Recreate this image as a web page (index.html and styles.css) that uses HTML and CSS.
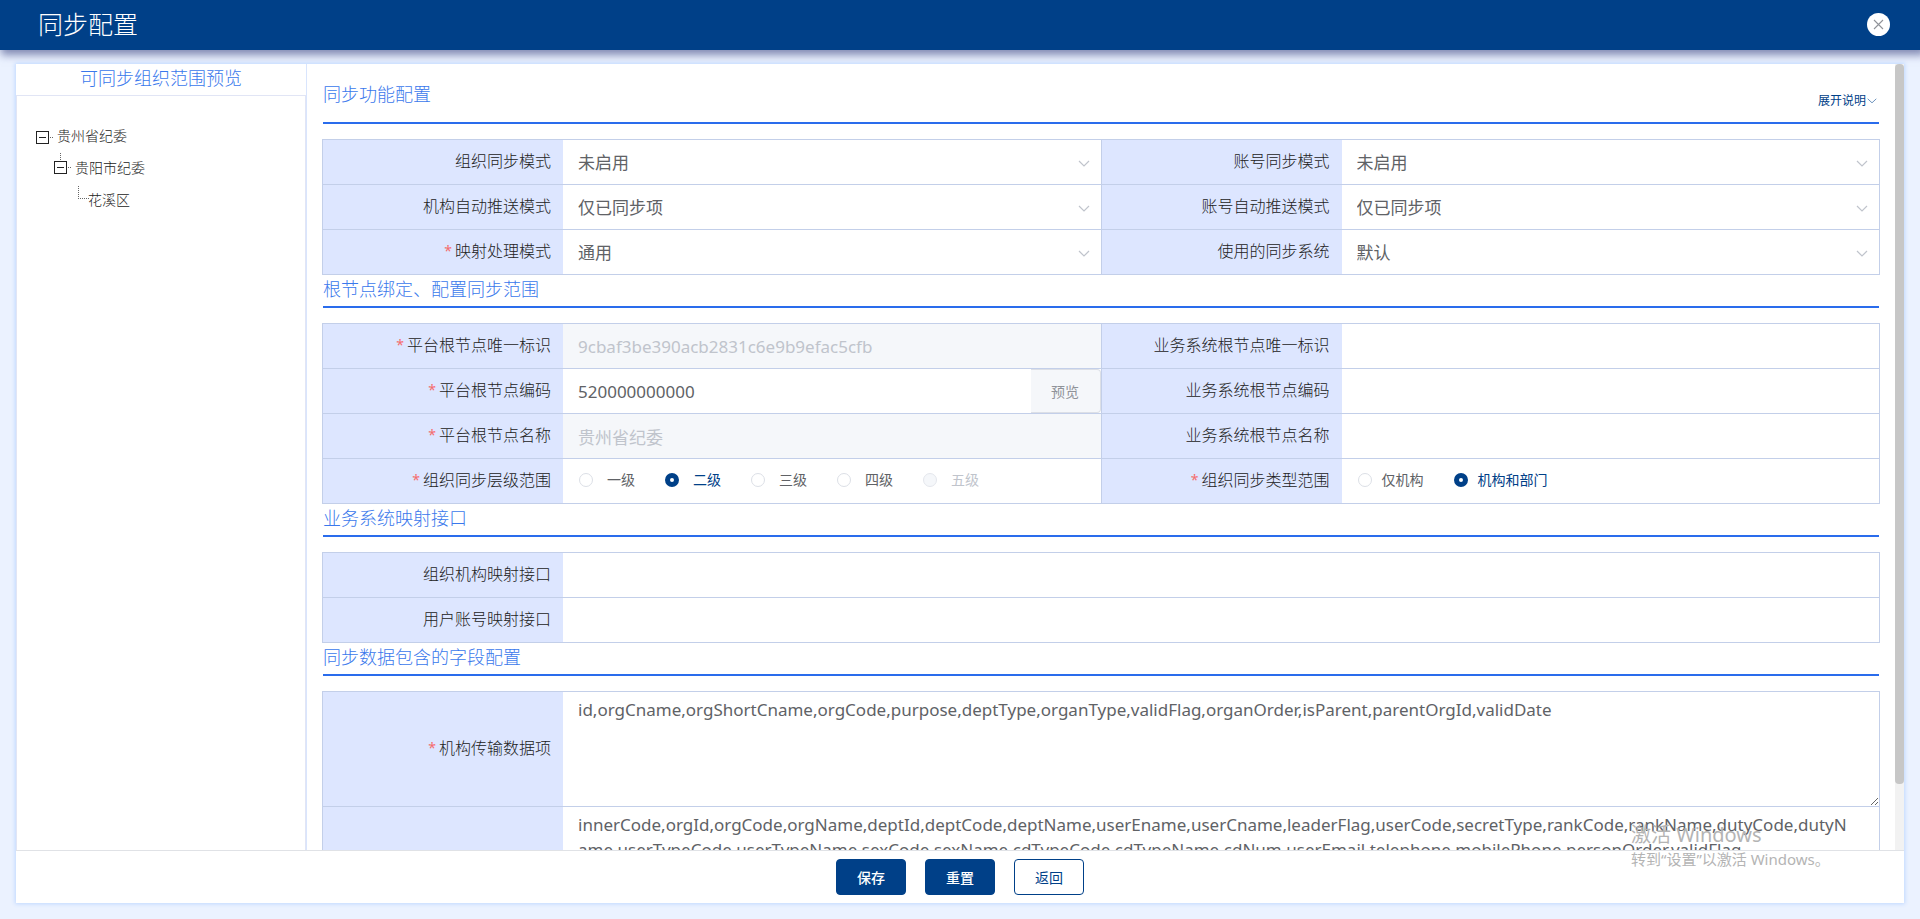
FILE: index.html
```html
<!DOCTYPE html>
<html lang="zh-CN">
<head>
<meta charset="utf-8">
<title>同步配置</title>
<link rel="stylesheet" href="styles.css">
</head>
<body>
<header class="topbar">
  <h1 class="topbar-title">同步配置</h1>
  <button class="close" type="button" aria-label="关闭">
    <svg width="11" height="11" viewBox="0 0 11 11"><path d="M1 1l9 9M10 1l-9 9" fill="none" stroke="#909399" stroke-width="1.1"/></svg>
  </button>
</header>

<form class="panel">
  <div class="columns">
    <aside class="side">
      <h2 class="side-title">可同步组织范围预览</h2>
      <div class="tree">
        <div class="node">
          <svg class="twig" width="18" height="32" viewBox="0 0 18 32"><rect x="0.5" y="11.5" width="12" height="12" fill="#fff" stroke="#222"/><path d="M3 17.5h7" stroke="#222"/><path d="M14 17.5h4" stroke="#666" stroke-dasharray="1 1"/></svg>
          <span class="node-text">贵州省纪委</span>
        </div>
        <div class="node level-2">
          <svg class="twig" width="18" height="32" viewBox="0 0 18 32"><path d="M6.500 1v8" stroke="#666" stroke-dasharray="1 1"/><rect x="0.5" y="9.5" width="12" height="12" fill="#fff" stroke="#222"/><path d="M3 15.500h7" stroke="#222"/><path d="M14 15.500h4" stroke="#666" stroke-dasharray="1 1"/></svg>
          <span class="node-text">贵阳市纪委</span>
        </div>
        <div class="node level-3">
          <svg class="twig leaf" width="12" height="32" viewBox="0 0 12 32"><path d="M.5 2v13M0 14.500h11" fill="none" stroke="#666" stroke-dasharray="1 1"/></svg>
          <span class="node-text">花溪区</span>
        </div>
      </div>
    </aside>

    <main class="content">
      <div class="section-head first">
        <h2 class="section-title">同步功能配置</h2>
        <button class="expand" type="button">展开说明<svg width="10" height="6" viewBox="0 0 10 6"><path d="M.7.8L5 4.800 9.300.8" fill="none" stroke="#6d93bd"/></svg></button>
      </div>
      <div class="grid">
        <div class="row">
          <div class="field"><label class="label" for="orgMode">组织同步模式</label><div class="cell"><select class="control" id="orgMode"><option>未启用</option></select><svg class="chevron" width="12" height="7" viewBox="0 0 12 7"><path d="M1 1l5 5 5-5" fill="none" stroke="#c0c4cc" stroke-width="1.200"/></svg></div></div>
          <div class="field"><label class="label" for="accMode">账号同步模式</label><div class="cell"><select class="control" id="accMode"><option>未启用</option></select><svg class="chevron" width="12" height="7" viewBox="0 0 12 7"><path d="M1 1l5 5 5-5" fill="none" stroke="#c0c4cc" stroke-width="1.200"/></svg></div></div>
        </div>
        <div class="row">
          <div class="field"><label class="label" for="orgPush">机构自动推送模式</label><div class="cell"><select class="control" id="orgPush"><option>仅已同步项</option></select><svg class="chevron" width="12" height="7" viewBox="0 0 12 7"><path d="M1 1l5 5 5-5" fill="none" stroke="#c0c4cc" stroke-width="1.200"/></svg></div></div>
          <div class="field"><label class="label" for="accPush">账号自动推送模式</label><div class="cell"><select class="control" id="accPush"><option>仅已同步项</option></select><svg class="chevron" width="12" height="7" viewBox="0 0 12 7"><path d="M1 1l5 5 5-5" fill="none" stroke="#c0c4cc" stroke-width="1.200"/></svg></div></div>
        </div>
        <div class="row">
          <div class="field"><label class="label required" for="mapMode">映射处理模式</label><div class="cell"><select class="control" id="mapMode"><option>通用</option></select><svg class="chevron" width="12" height="7" viewBox="0 0 12 7"><path d="M1 1l5 5 5-5" fill="none" stroke="#c0c4cc" stroke-width="1.200"/></svg></div></div>
          <div class="field"><label class="label" for="system">使用的同步系统</label><div class="cell"><select class="control" id="system"><option>默认</option></select><svg class="chevron" width="12" height="7" viewBox="0 0 12 7"><path d="M1 1l5 5 5-5" fill="none" stroke="#c0c4cc" stroke-width="1.200"/></svg></div></div>
        </div>
      </div>

      <div class="section-head"><h2 class="section-title">根节点绑定、配置同步范围</h2></div>
      <div class="grid">
        <div class="row">
          <div class="field"><label class="label required" for="rootId">平台根节点唯一标识</label><div class="cell"><input class="control" id="rootId" type="text" value="9cbaf3be390acb2831c6e9b9efac5cfb" disabled></div></div>
          <div class="field"><label class="label" for="bizId">业务系统根节点唯一标识</label><div class="cell"><input class="control" id="bizId" type="text"></div></div>
        </div>
        <div class="row">
          <div class="field"><label class="label required" for="rootCode">平台根节点编码</label><div class="cell"><input class="control" id="rootCode" type="text" value="520000000000"><button class="preview" type="button">预览</button></div></div>
          <div class="field"><label class="label" for="bizCode">业务系统根节点编码</label><div class="cell"><input class="control" id="bizCode" type="text"></div></div>
        </div>
        <div class="row">
          <div class="field"><label class="label required" for="rootName">平台根节点名称</label><div class="cell"><input class="control" id="rootName" type="text" value="贵州省纪委" disabled></div></div>
          <div class="field"><label class="label" for="bizName">业务系统根节点名称</label><div class="cell"><input class="control" id="bizName" type="text"></div></div>
        </div>
        <div class="row">
          <div class="field"><span class="label required" id="levelLabel">组织同步层级范围</span>
            <div class="cell radios wide" role="radiogroup" aria-labelledby="levelLabel">
              <label class="radio"><input type="radio" name="level">一级</label>
              <label class="radio"><input type="radio" name="level" checked>二级</label>
              <label class="radio"><input type="radio" name="level">三级</label>
              <label class="radio"><input type="radio" name="level">四级</label>
              <label class="radio"><input type="radio" name="level" disabled>五级</label>
            </div>
          </div>
          <div class="field"><span class="label required" id="typeLabel">组织同步类型范围</span>
            <div class="cell radios" role="radiogroup" aria-labelledby="typeLabel">
              <label class="radio"><input type="radio" name="type">仅机构</label>
              <label class="radio"><input type="radio" name="type" checked>机构和部门</label>
            </div>
          </div>
        </div>
      </div>

      <div class="section-head"><h2 class="section-title">业务系统映射接口</h2></div>
      <div class="grid">
        <div class="row"><div class="field"><label class="label" for="orgApi">组织机构映射接口</label><div class="cell"><input class="control" id="orgApi" type="text"></div></div></div>
        <div class="row"><div class="field"><label class="label" for="userApi">用户账号映射接口</label><div class="cell"><input class="control" id="userApi" type="text"></div></div></div>
      </div>

      <div class="section-head"><h2 class="section-title">同步数据包含的字段配置</h2></div>
      <div class="grid">
        <div class="row tall"><div class="field"><label class="label required" for="orgFields">机构传输数据项</label><div class="cell"><textarea class="control" id="orgFields" spellcheck="false">id,orgCname,orgShortCname,orgCode,purpose,deptType,organType,validFlag,organOrder,isParent,parentOrgId,validDate</textarea></div></div></div>
        <div class="row tall"><div class="field"><label class="label" for="userFields"></label><div class="cell"><textarea class="control" id="userFields" spellcheck="false">innerCode,orgId,orgCode,orgName,deptId,deptCode,deptName,userEname,userCname,leaderFlag,userCode,secretType,rankCode,rankName,dutyCode,dutyN
ame,userTypeCode,userTypeName,sexCode,sexName,cdTypeCode,cdTypeName,cdNum,userEmail,telephone,mobilePhone,personOrder,validFlag</textarea></div></div></div>
      </div>
    </main>
    <div class="scroll-track"><div class="scroll-thumb"></div></div>
  </div>
  <footer class="actions">
    <button class="btn primary" type="button">保存</button>
    <button class="btn primary" type="button">重置</button>
    <button class="btn" type="button">返回</button>
  </footer>
</form>

<div class="watermark">
  <p class="watermark-title">激活 Windows</p>
  <p class="watermark-text">转到“设置”以激活 Windows。</p>
</div>
</body>
</html>
```
FILE: styles.css
```css
* { box-sizing: border-box; }
html, body { height: 100%; }
body {
  margin: 0;
  display: flex;
  flex-direction: column;
  overflow: hidden;
  background: #ebf2ff;
  color: #606266;
  font-family: "Noto Sans", "Noto Sans CJK SC", sans-serif;
  font-size: 14px;
}
h1, h2, p { margin: 0; font-weight: 300; }
button, input, select, textarea { font-family: inherit; }
button { cursor: pointer; }

.topbar {
  flex: none;
  display: flex;
  align-items: center;
  justify-content: space-between;
  height: 50px;
  padding: 0 30px 2px 38px;
  background: #004088;
  box-shadow: 3px 3px 8px 2px rgba(60, 70, 130, .6);
}
.topbar-title { color: #fff; font-size: 25px; line-height: 32px; }
.close {
  display: flex;
  align-items: center;
  justify-content: center;
  width: 23px;
  height: 23px;
  padding: 0;
  border: 0;
  border-radius: 50%;
  background: #fff;
}

.panel {
  flex: 1;
  min-height: 0;
  display: flex;
  flex-direction: column;
  margin: 14px 16px 16px;
  background: #fff;
  box-shadow: 0 0 4px 1px #c0d8ff;
}
.columns { flex: 1; min-height: 0; display: flex; }

.side {
  flex: none;
  width: 291px;
  display: flex;
  flex-direction: column;
  border-right: 1px solid #d9e5fd;
}
.side-title {
  height: 31px;
  color: #3a78ec;
  font-size: 18px;
  line-height: 28px;
  text-align: center;
}
.tree {
  flex: 1;
  padding: 24px 19px;
  border: 1px solid #e1e5f5;
  border-bottom: 0;
}
.node { display: flex; height: 32px; color: #222; font-weight: 300; line-height: 32px; }
.level-2 { padding-left: 18px; }
.level-3 { padding-left: 42px; }
.twig { flex: none; margin-right: 3px; }
.leaf { margin-right: -2px; }

.content {
  flex: 1;
  min-width: 0;
  overflow-y: auto;
  padding: 0 16px;
  scrollbar-width: none;
}
.scroll-track { flex: none; width: 9px; background: #f2f2f2; }
.scroll-thumb { height: 91.6%; border-radius: 4px; background: #c7c7c7; }

.section-head {
  display: flex;
  justify-content: space-between;
  align-items: flex-start;
  height: 33px;
  margin-bottom: 15px;
  border-bottom: 2px solid #2a6cec;
}
.section-head.first { height: 60px; padding-top: 16px; }
.section-title { color: #3a78ec; font-size: 18px; line-height: 28px; }
.expand {
  display: flex;
  align-items: center;
  gap: 1px;
  margin: 12px 2px 0 0;
  padding: 0;
  border: 0;
  background: none;
  color: #004088;
  font-size: 12px;
  line-height: 18px;
}

.grid { margin: 0 -1px; border: 1px solid #c3cfe9; }
.row { display: flex; height: 45px; border-bottom: 1px solid #c3cfe9; }
.row:last-child { height: 44px; border-bottom: 0; }
.row.tall { height: 115px; }
.field { flex: 1 1 0; min-width: 0; display: flex; }
.field:not(:last-child) { border-right: 1px solid #c3cfe9; }
.label {
  flex: none;
  display: flex;
  align-items: center;
  justify-content: flex-end;
  width: 240px;
  padding: 0 12px 4px 0;
  background: #dde6ff;
  color: #222;
  font-size: 16px;
  font-weight: 300;
}
.required::before { content: "*"; margin-right: 3px; color: #f56c6c; font-size: 14px; font-weight: 400; }
.cell { flex: 1; min-width: 0; display: flex; position: relative; }
.control {
  flex: 1;
  min-width: 0;
  margin: 0;
  padding: 0 15px;
  border: 0;
  border-radius: 0;
  outline: 0;
  appearance: none;
  background: #fff;
  color: #606266;
  font-size: 17px;
}
.control:disabled { background: #f5f7fa; color: #c0c4cc; }
.chevron { position: absolute; right: 11px; top: 20px; pointer-events: none; }
textarea.control {
  padding: 5px 15px;
  line-height: 25px;
  resize: vertical;
  word-break: break-all;
}
.preview {
  flex: none;
  width: 70px;
  padding: 0;
  border: 1px solid #dcdfe6;
  border-left: 0;
  border-radius: 0 4px 4px 0;
  background: #f5f7fa;
  color: #909399;
  font-size: 14px;
}

.radios { align-items: center; gap: 30px; padding: 0 0 2px 16px; }
.radio { display: flex; align-items: center; gap: 10px; font-size: 14px; line-height: 20px; }
.wide .radio { gap: 14px; }
.radio input {
  width: 14px;
  height: 14px;
  margin: 0;
  appearance: none;
  border: 1px solid #dcdfe6;
  border-radius: 50%;
  background: #fff;
}
.radio input:checked { border: 5px solid #004088; }
.radio input:disabled { background: #f5f7fa; border-color: #e4e7ed; }
.radio:has(:checked) { color: #004088; }
.radio:has(:disabled) { color: #c0c4cc; }

.actions {
  flex: none;
  display: flex;
  justify-content: center;
  gap: 19px;
  padding: 8px 0;
  border-top: 1px solid #e0e2e6;
}
.btn {
  width: 70px;
  height: 36px;
  padding: 0 0 1px;
  border: 1px solid #004088;
  border-radius: 4px;
  background: #fff;
  color: #004088;
  font-size: 14px;
}
.primary { background: #004088; color: #fff; font-weight: 500; }

.watermark {
  position: absolute;
  right: 90px;
  bottom: 48px;
  width: 199px;
  color: #b4b4b4;
  pointer-events: none;
  white-space: nowrap;
}
.watermark p { font-weight: 400; }
.watermark-title { font-size: 20px; line-height: 24px; }
.watermark-text { font-size: 15px; line-height: 24px; }
```
